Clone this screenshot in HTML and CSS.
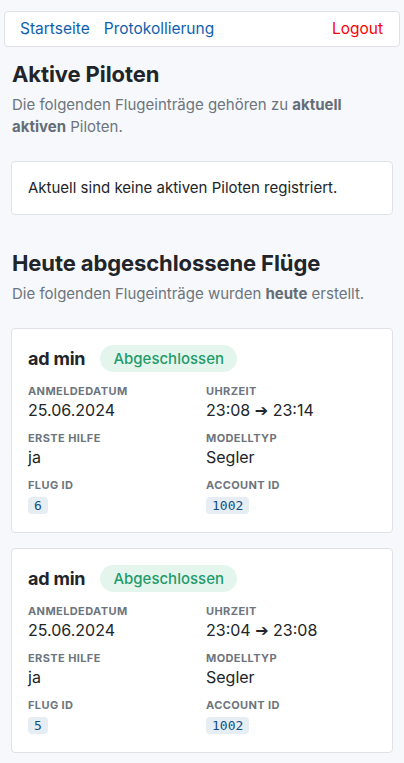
FILE: index.html
```html
<!DOCTYPE html>
<html lang="de">
<head>
<meta charset="utf-8">
<title>Aktive Piloten</title>
<link rel="stylesheet" href="styles.css">
</head>
<body>
<nav class="nav">
  <div class="nav-links">
    <a class="nav-link" href="#">Startseite</a>
    <a class="nav-link" href="#">Protokollierung</a>
  </div>
  <a class="nav-logout" href="#">Logout</a>
</nav>
<main class="main">
  <section class="section">
    <h1 class="title">Aktive Piloten</h1>
    <p class="lead">Die folgenden Flugeinträge gehören zu <b>aktuell aktiven</b> Piloten.</p>
    <div class="box">Aktuell sind keine aktiven Piloten registriert.</div>
  </section>
  <section class="section">
    <h2 class="title">Heute abgeschlossene Flüge</h2>
    <p class="lead">Die folgenden Flugeinträge wurden <b>heute</b> erstellt.</p>
    <div class="cards">
      <article class="card">
        <div class="card-head">
          <span class="name">ad min</span>
          <span class="badge">Abgeschlossen</span>
        </div>
        <dl class="grid">
          <div class="field"><dt>Anmeldedatum</dt><dd>25.06.2024</dd></div>
          <div class="field"><dt>Uhrzeit</dt><dd>23:08 ➔ 23:14</dd></div>
          <div class="field"><dt>Erste Hilfe</dt><dd>ja</dd></div>
          <div class="field"><dt>Modelltyp</dt><dd>Segler</dd></div>
          <div class="field"><dt>Flug ID</dt><dd><code class="code">6</code></dd></div>
          <div class="field"><dt>Account ID</dt><dd><code class="code">1002</code></dd></div>
        </dl>
      </article>
      <article class="card">
        <div class="card-head">
          <span class="name">ad min</span>
          <span class="badge">Abgeschlossen</span>
        </div>
        <dl class="grid">
          <div class="field"><dt>Anmeldedatum</dt><dd>25.06.2024</dd></div>
          <div class="field"><dt>Uhrzeit</dt><dd>23:04 ➔ 23:08</dd></div>
          <div class="field"><dt>Erste Hilfe</dt><dd>ja</dd></div>
          <div class="field"><dt>Modelltyp</dt><dd>Segler</dd></div>
          <div class="field"><dt>Flug ID</dt><dd><code class="code">5</code></dd></div>
          <div class="field"><dt>Account ID</dt><dd><code class="code">1002</code></dd></div>
        </dl>
      </article>
    </div>
  </section>
</main>
</body>
</html>
```

FILE: styles.css
```css
* { box-sizing: border-box; }
html, body { margin: 0; }
body {
  background: #f7f8fb;
  font-family: Inter, "Noto Sans", "DejaVu Sans", sans-serif;
  color: #212529;
  padding: 11px 4px 20px;
}
.nav {
  display: flex;
  justify-content: space-between;
  align-items: center;
  background: #fff;
  border: 1px solid #dfe1e6;
  border-radius: 4px;
  height: 36px;
  padding: 0 16px 0 15px;
  font-size: 15.5px;
  line-height: 20px;
}
.nav-links { display: flex; gap: 14px; }
.nav-link { color: #0f5fae; text-decoration: none; }
.nav-logout { color: #ff0000; text-decoration: none; }
.main { padding: 0 7px; }
.section { display: flex; flex-direction: column; }
.section + .section { margin-top: 35px; }
.title {
  font-size: 22px;
  line-height: 26px;
  font-weight: 700;
  margin: 14px 0 7px 1px;
  letter-spacing: -0.1px;
}
.section + .section .title { margin-top: 0; }
.lead {
  margin: 0 0 23px 1px;
  font-size: 15px;
  line-height: 22px;
  color: #6c757d;
}
.lead b { font-weight: 700; color: #646d76; }
.box {
  background: #fff;
  border: 1px solid #dee2e6;
  border-radius: 4px;
  padding: 16px 16px;
  font-size: 15px;
  line-height: 20px;
}
.cards { display: flex; flex-direction: column; gap: 15px; }
.card {
  background: #fff;
  border: 1px solid #dee2e6;
  border-radius: 4px;
  padding: 16px 16px 14px;
}
.card-head { display: flex; align-items: center; gap: 15px; height: 27px; }
.name { font-size: 18px; font-weight: 700; letter-spacing: -0.2px; }
.badge {
  background: #e4f5ee;
  color: #1f9b69;
  font-size: 15px;
  font-weight: 500;
  line-height: 27px;
  height: 27px;
  padding: 0 13px;
  border-radius: 14px;
}
.grid {
  display: grid;
  grid-template-columns: 1fr 1fr;
  column-gap: 8px;
  row-gap: 9px;
  margin: 12px 0 0;
}
.field dt {
  font-size: 11px;
  line-height: 14px;
  font-weight: 700;
  text-transform: uppercase;
  letter-spacing: 0.4px;
  color: #6c757d;
}
.field dd {
  margin: 0;
  font-size: 16px;
  line-height: 24px;
}
.code {
  font-family: "DejaVu Sans Mono", "Liberation Mono", monospace;
  font-size: 13px;
  color: #134f86;
  background: #e6eef4;
  border-radius: 4px;
  padding: 1px 6px;
}
```
